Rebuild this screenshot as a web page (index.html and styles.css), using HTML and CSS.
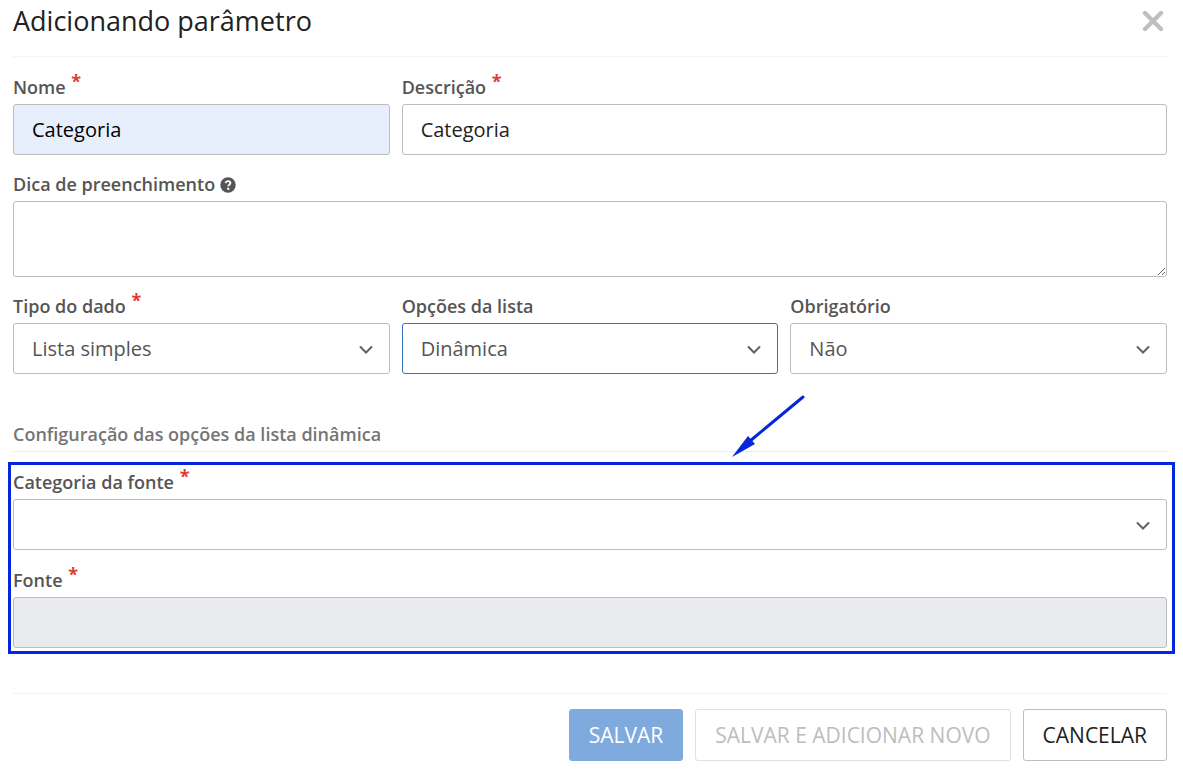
FILE: index.html
```html
<!DOCTYPE html>
<html lang="pt-BR">
<head>
<meta charset="utf-8">
<meta name="viewport" content="width=device-width, initial-scale=1">
<title>Adicionando parâmetro</title>
<link rel="stylesheet" href="styles.css">
</head>
<body>
<main class="dialog">
  <header class="dialog-header">
    <h1 class="dialog-title">Adicionando parâmetro</h1>
    <button class="close" type="button" aria-label="Fechar">
      <svg width="22" height="22" viewBox="0 0 22 22" aria-hidden="true"><path d="M3 3L19 19M19 3L3 19" stroke="#bfbfbf" stroke-width="4.4" stroke-linecap="round"/></svg>
    </button>
  </header>
  <form class="form">
    <div class="row">
      <div class="field">
        <label class="label" for="nome">Nome <span class="required">*</span></label>
        <input class="control filled" id="nome" type="text" value="Categoria">
      </div>
      <div class="field wide">
        <label class="label" for="descricao">Descrição <span class="required">*</span></label>
        <input class="control" id="descricao" type="text" value="Categoria">
      </div>
    </div>
    <div class="field">
      <label class="label" for="dica">Dica de preenchimento
        <svg class="help" width="16" height="16" viewBox="0 0 16 16" aria-hidden="true"><circle cx="8" cy="8" r="7.7" fill="#555"/><path d="M5.6 6.2C5.8 4.7 6.7 4.1 8 4.1C9.4 4.1 10.4 4.9 10.4 6.1C10.4 7.6 8.2 7.7 8.2 9.3" fill="none" stroke="#fff" stroke-width="1.9"/><circle cx="8.2" cy="11.8" r="1.2" fill="#fff"/></svg>
      </label>
      <textarea class="control area" id="dica"></textarea>
    </div>
    <div class="row">
      <div class="field">
        <label class="label" for="tipo">Tipo do dado <span class="required">*</span></label>
        <div class="select-box">
          <select class="control" id="tipo"><option>Lista simples</option></select>
          <svg class="chevron" width="14" height="10" viewBox="0 0 14 10" aria-hidden="true"><path d="M1.5 2L7 7.5L12.5 2"/></svg>
        </div>
      </div>
      <div class="field">
        <label class="label" for="opcoes">Opções da lista</label>
        <div class="select-box">
          <select class="control active" id="opcoes"><option>Dinâmica</option></select>
          <svg class="chevron" width="14" height="10" viewBox="0 0 14 10" aria-hidden="true"><path d="M1.5 2L7 7.5L12.5 2"/></svg>
        </div>
      </div>
      <div class="field">
        <label class="label" for="obrigatorio">Obrigatório</label>
        <div class="select-box">
          <select class="control" id="obrigatorio"><option>Não</option></select>
          <svg class="chevron" width="14" height="10" viewBox="0 0 14 10" aria-hidden="true"><path d="M1.5 2L7 7.5L12.5 2"/></svg>
        </div>
      </div>
    </div>
    <section class="source">
      <h2 class="section-title">Configuração das opções da lista dinâmica</h2>
      <div class="highlighted">
        <svg class="arrow" width="74" height="64" viewBox="0 0 74 64" aria-hidden="true"><path d="M71 3L18 47" stroke="#0426dc" stroke-width="3" stroke-linecap="round"/><path d="M0 63L16 42L23 50Z" fill="#0426dc"/></svg>
        <div class="field">
          <label class="label" for="categoria-fonte">Categoria da fonte <span class="required">*</span></label>
          <div class="select-box">
            <select class="control" id="categoria-fonte"><option></option></select>
            <svg class="chevron" width="14" height="10" viewBox="0 0 14 10" aria-hidden="true"><path d="M1.5 2L7 7.5L12.5 2"/></svg>
          </div>
        </div>
        <div class="field">
          <label class="label" for="fonte">Fonte <span class="required">*</span></label>
          <input class="control" id="fonte" type="text" disabled>
        </div>
      </div>
    </section>
    <footer class="actions">
      <button class="button primary" type="submit" disabled>SALVAR</button>
      <button class="button muted" type="button" disabled>SALVAR E ADICIONAR NOVO</button>
      <button class="button" type="button">CANCELAR</button>
    </footer>
  </form>
</main>
</body>
</html>
```
FILE: styles.css
```css
* { box-sizing: border-box; }

body {
  margin: 0;
  background: #fff;
  color: #212121;
  font-family: "Open Sans", "Noto Sans", sans-serif;
}

.dialog { padding: 0 16px 10px 13px; }

.dialog-header {
  display: flex;
  align-items: center;
  justify-content: space-between;
  padding: 1px 3px 15px 0;
  border-bottom: 1px solid #f3f3f3;
}

.dialog-title {
  margin: 0;
  font-size: 27px;
  font-weight: 400;
  line-height: 40px;
}

.close {
  display: flex;
  padding: 0;
  border: 0;
  background: none;
}

.form {
  display: flex;
  flex-direction: column;
  gap: 18px;
  padding-top: 19px;
}

.row {
  display: grid;
  grid-template-columns: repeat(3, 1fr);
  gap: 12px;
}

.wide { grid-column: span 2; }

.field {
  display: flex;
  flex-direction: column;
  gap: 6px;
}

.label {
  display: block;
  color: #555;
  font-size: 18px;
  font-weight: 600;
  line-height: 22px;
}

.required {
  margin-left: 1px;
  color: #de3b33;
  font-weight: 700;
  line-height: 0;
  vertical-align: 6px;
}

.help { vertical-align: -2px; }

.control {
  display: block;
  width: 100%;
  height: 51px;
  padding: 0 18px;
  border: 1px solid #bdbdbd;
  border-radius: 3px;
  background: #fff;
  color: #212121;
  font-family: inherit;
  font-size: 20px;
  appearance: none;
}

.filled { background: #e8effc; color: #000; }
.area { height: 76px; padding: 10px 18px; resize: vertical; }
select.control { padding: 0 48px 0 18px; color: #555; opacity: 1; }
.control:disabled { background: #eaebef; }
.control.active { border-color: #3274bf; }

.select-box { position: relative; }

.chevron {
  position: absolute;
  top: 22px;
  right: 17px;
  fill: none;
  stroke: #616161;
  stroke-width: 2;
  stroke-linecap: round;
  pointer-events: none;
}

.source { padding-top: 30px; }

.section-title {
  margin: 0 0 19px;
  padding-bottom: 5px;
  border-bottom: 1px solid #ececec;
  color: #757575;
  font-size: 18px;
  font-weight: 600;
  line-height: 24px;
}

.highlighted {
  position: relative;
  display: flex;
  flex-direction: column;
  gap: 19px;
}

.highlighted::after {
  content: "";
  position: absolute;
  inset: -9px -8px -6px -5px;
  border: 3px solid #0426dc;
  pointer-events: none;
}

.arrow {
  position: absolute;
  top: -77px;
  left: 62.3%;
}

.actions {
  display: flex;
  justify-content: flex-end;
  gap: 12px;
  margin-top: 27px;
  padding-top: 15px;
  border-top: 1px solid #f3f3f3;
}

.button {
  height: 52px;
  padding: 0 19px;
  border: 1px solid #bdbdbd;
  border-radius: 3px;
  background: #fff;
  color: #212121;
  font-family: inherit;
  font-size: 21px;
}

.primary { border-color: #7faadd; background: #7faadd; color: #fff; }
.muted { border-color: #e0e1e6; color: #bdbdbd; }
```
